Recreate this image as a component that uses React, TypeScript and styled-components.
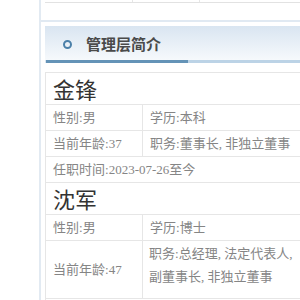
import React from "react";
import styled, { createGlobalStyle } from "styled-components";

type Member = {
  name: string;
  gender: string;
  degree: string;
  age: number;
  duty: string;
  since: string;
};

const members: Member[] = [
  {
    name: "金锋",
    gender: "男",
    degree: "本科",
    age: 37,
    duty: "董事长, 非独立董事",
    since: "2023-07-26至今",
  },
  {
    name: "沈军",
    gender: "男",
    degree: "博士",
    age: 47,
    duty: "总经理, 法定代表人, 副董事长, 非独立董事",
    since: "2023-07-26至今",
  },
];

const App: React.FC = () => {
  return (
    <>
      <GlobalStyle />
      <Page>
        <Gutter />
        <Column>
          <PrevTableEnd>
            <span />
            <span />
            <span />
          </PrevTableEnd>
          <Divider />
          <SectionHeader>
            <Ring />
            <Title>管理层简介</Title>
          </SectionHeader>
          <MemberTable>
            <colgroup>
              <col style={{ width: 97 }} />
              <col />
            </colgroup>
            <tbody>
              {members.map((m) => (
                <React.Fragment key={m.name}>
                  <tr>
                    <NameCell colSpan={2}>{m.name}</NameCell>
                  </tr>
                  <tr>
                    <Cell>性别:{m.gender}</Cell>
                    <Cell>学历:{m.degree}</Cell>
                  </tr>
                  <tr>
                    <Cell>当前年龄:{m.age}</Cell>
                    <Cell $tall={m.duty.length > 12}>职务:{m.duty}</Cell>
                  </tr>
                  <tr>
                    <Cell colSpan={2}>任职时间:{m.since}</Cell>
                  </tr>
                </React.Fragment>
              ))}
            </tbody>
          </MemberTable>
        </Column>
      </Page>
    </>
  );
};

const GlobalStyle = createGlobalStyle`
  body {
    margin: 0;
    background: #fff;
    overflow: hidden;
  }
`;

const Page = styled.div`
  display: flex;
  height: 300px;
  overflow: hidden;
`;

const Gutter = styled.div`
  flex: none;
  width: 39px;
`;

const Column = styled.div`
  flex: none;
  width: 600px;
  border-left: 2px solid #e2eaf2;
`;

const PrevTableEnd = styled.div`
  display: grid;
  grid-template-columns: 88px 67px 1fr;
  margin-left: 4px;
  height: 2px;
  border-bottom: 1px solid #e2e2e2;
  & span {
    border-right: 1px solid #e6e6e6;
  }
`;

const Divider = styled.div`
  margin-top: 17px;
  height: 2px;
  background: #e0e9f2;
`;

const SectionHeader = styled.div`
  display: flex;
  align-items: center;
  margin: 4px 0 0 4px;
  height: 34px;
  padding-left: 17px;
  border-left: 1px solid #e3ebf3;
  background: linear-gradient(to bottom, #d9e5f1, #f6f9fc);
  border-bottom: 3px solid #bcd3e6;
  border-image: linear-gradient(to right, #6493b7 0 142px, #bcd3e6 142px) 1;
  border-image-slice: 0 0 1 0;
`;

const Ring = styled.span`
  flex: none;
  width: 9px;
  height: 9px;
  box-sizing: border-box;
  border-radius: 50%;
  border: 2.5px solid #4b80a9;
  margin-top: 3px;
`;

const Title = styled.span`
  margin-left: 14px;
  font-family: "Liberation Serif", "Noto Sans CJK SC", serif;
  font-weight: bold;
  font-size: 15px;
  color: #4a4a4a;
`;

const MemberTable = styled.table`
  margin: 9px 0 0 4px;
  width: 258px;
  table-layout: fixed;
  border-collapse: collapse;
  border: 1px solid #e6e6e6;
`;

const NameCell = styled.td`
  height: 31px;
  padding: 0 7px;
  border: 1px solid #e6e6e6;
  font-family: "Noto Sans CJK SC", sans-serif;
  font-size: 22px;
  line-height: 31px;
  color: #333;
`;

const Cell = styled.td<{ $tall?: boolean }>`
  padding: ${(p) => (p.$tall ? "1px 6px 10px 6px" : "1px 7px")};
  border: 1px solid #e6e6e6;
  font-family: "Liberation Serif", "Noto Sans CJK SC", serif;
  font-size: 13px;
  line-height: 23px;
  color: #858585;
  vertical-align: middle;
`;

export default App;
